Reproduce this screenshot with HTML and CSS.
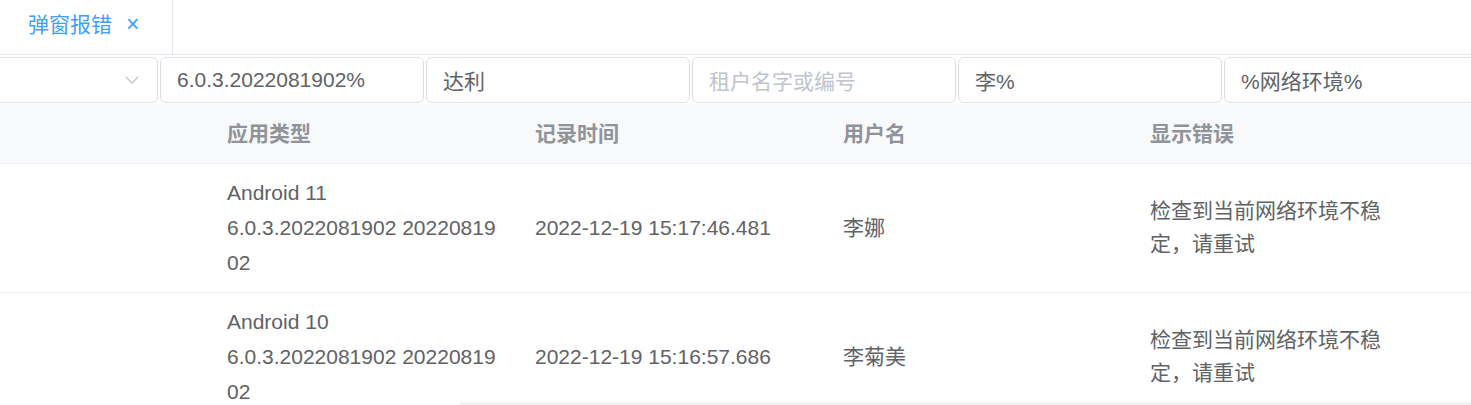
FILE: index.html
```html
<!DOCTYPE html>
<html lang="zh-CN">
<head>
<meta charset="utf-8">
<title>弹窗报错</title>
<link rel="stylesheet" href="styles.css">
</head>
<body>
<div class="page">
  <div class="tabs">
    <div class="tab active">
      <span class="tab-label">弹窗报错</span>
      <span class="tab-close">×</span>
    </div>
  </div>

  <div class="filters">
    <div class="input select first">
      <span class="value"></span>
      <svg class="chevron" width="14" height="8" viewBox="0 0 14 8"><path d="M1 1 L7 7 L13 1" fill="none" stroke="#c0c4cc" stroke-width="1.3"/></svg>
    </div>
    <div class="input"><span class="value">6.0.3.2022081902%</span></div>
    <div class="input"><span class="value">达利</span></div>
    <div class="input"><span class="placeholder">租户名字或编号</span></div>
    <div class="input"><span class="value">李%</span></div>
    <div class="input last"><span class="value">%网络环境%</span></div>
  </div>

  <div class="table">
    <div class="row head">
      <div class="cell"></div>
      <div class="cell">应用类型</div>
      <div class="cell">记录时间</div>
      <div class="cell">用户名</div>
      <div class="cell err">显示错误</div>
      <div class="cell"></div>
    </div>
    <div class="row">
      <div class="cell"></div>
      <div class="cell">Android 11<br>6.0.3.2022081902 2022081902</div>
      <div class="cell">2022-12-19 15:17:46.481</div>
      <div class="cell">李娜</div>
      <div class="cell err">检查到当前网络环境不稳定，请重试</div>
      <div class="cell"></div>
    </div>
    <div class="row">
      <div class="cell"></div>
      <div class="cell">Android 10<br>6.0.3.2022081902 2022081902</div>
      <div class="cell">2022-12-19 15:16:57.686</div>
      <div class="cell">李菊美</div>
      <div class="cell err">检查到当前网络环境不稳定，请重试</div>
      <div class="cell"></div>
    </div>
  </div>
  <div class="hscroll"></div>
</div>
</body>
</html>
```

FILE: styles.css
```css
html, body {
  margin: 0;
  padding: 0;
  background: #ffffff;
  overflow: hidden;
}

body {
  font-family: "Liberation Sans", "Noto Sans CJK SC", sans-serif;
  font-size: 21px;
  color: #606266;
}

.page {
  width: 1471px;
  height: 405px;
  overflow: hidden;
  position: relative;
}

/* tabs */
.tabs {
  height: 55px;
  border-bottom: 1px solid #e4e7ed;
  display: flex;
  box-sizing: border-box;
}

.tab {
  width: 173px;
  box-sizing: border-box;
  border-right: 1px solid #e4e7ed;
  display: flex;
  align-items: center;
  padding-left: 28px;
  padding-bottom: 5px;
  color: #409eff;
}

.tab-label {
  font-size: 21px;
  line-height: 1;
}

.tab-close {
  font-size: 23px;
  margin-left: 14px;
  line-height: 1;
}

/* filter inputs */
.filters {
  display: flex;
  gap: 2px;
  margin-top: 2px;
  margin-left: -10px;
}

.input {
  flex: 0 0 264px;
  height: 46px;
  box-sizing: border-box;
  border: 1px solid #dcdfe6;
  border-radius: 6px;
  display: flex;
  align-items: center;
  padding: 0 16px;
  padding-bottom: 1px;
  font-size: 21px;
  color: #606266;
  white-space: nowrap;
}

.input.first {
  flex: 0 0 168px;
  justify-content: flex-end;
  padding-right: 18px;
}

.input.last {
  flex: 0 0 280px;
}

.placeholder {
  color: #c0c4cc;
}

.chevron {
  display: block;
}

/* table */
.table {
  margin-top: 1px;
}

.row {
  display: grid;
  grid-template-columns: 212px 308px 308px 307px 270px 1fr;
  border-bottom: 1px solid #ebeef5;
  align-items: center;
}

.row.head {
  background: #f8f9fb;
  height: 60px;
  box-sizing: border-box;
}

.row.head .cell {
  font-weight: bold;
  color: #909399;
  line-height: 30px;
  padding: 0 15px;
}

.cell {
  padding: 10px 15px 12px;
  line-height: 35px;
  word-break: break-all;
  overflow-wrap: anywhere;
}

.cell.err {
  line-height: 33px;
}

.row:not(.head) {
  min-height: 128px;
}

.hscroll {
  position: absolute;
  left: 460px;
  right: 0;
  bottom: 0;
  height: 5px;
  background: linear-gradient(#ffffff, #eeeeee);
}
```
